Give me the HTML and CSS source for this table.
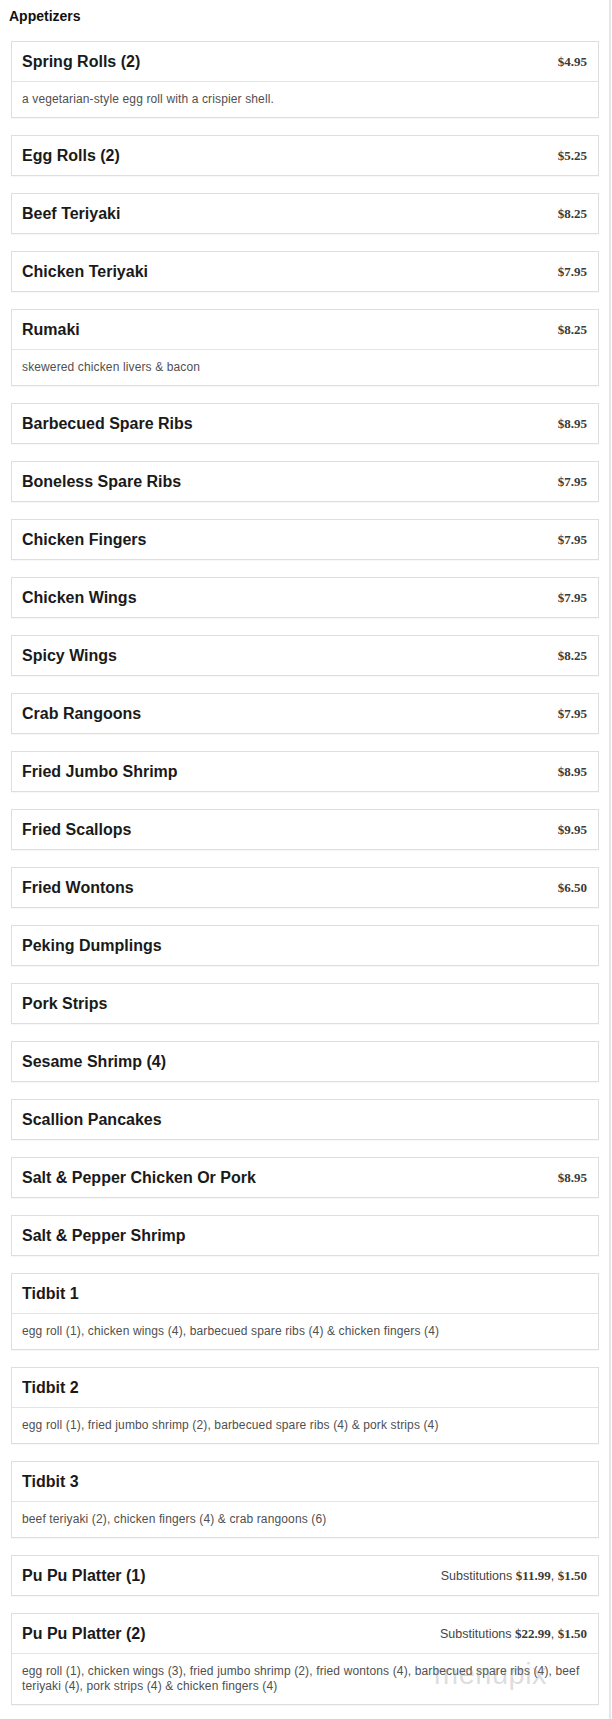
FILE: index.html
```html
<!DOCTYPE html>
<html>
<head>
<meta charset="utf-8">
<link rel="stylesheet" href="styles.css">
</head>
<body>
<div class="page">
  <h2 class="section-title">Appetizers</h2>
  <div class="menu-list">
    <div class="item">
      <div class="item-head"><span class="name">Spring Rolls (2)</span><span class="price">$4.95</span></div>
      <div class="item-desc">a vegetarian-style egg roll with a crispier shell.</div>
    </div>
    <div class="item">
      <div class="item-head"><span class="name">Egg Rolls (2)</span><span class="price">$5.25</span></div>
    </div>
    <div class="item">
      <div class="item-head"><span class="name">Beef Teriyaki</span><span class="price">$8.25</span></div>
    </div>
    <div class="item">
      <div class="item-head"><span class="name">Chicken Teriyaki</span><span class="price">$7.95</span></div>
    </div>
    <div class="item">
      <div class="item-head"><span class="name">Rumaki</span><span class="price">$8.25</span></div>
      <div class="item-desc">skewered chicken livers &amp; bacon</div>
    </div>
    <div class="item">
      <div class="item-head"><span class="name">Barbecued Spare Ribs</span><span class="price">$8.95</span></div>
    </div>
    <div class="item">
      <div class="item-head"><span class="name">Boneless Spare Ribs</span><span class="price">$7.95</span></div>
    </div>
    <div class="item">
      <div class="item-head"><span class="name">Chicken Fingers</span><span class="price">$7.95</span></div>
    </div>
    <div class="item">
      <div class="item-head"><span class="name">Chicken Wings</span><span class="price">$7.95</span></div>
    </div>
    <div class="item">
      <div class="item-head"><span class="name">Spicy Wings</span><span class="price">$8.25</span></div>
    </div>
    <div class="item">
      <div class="item-head"><span class="name">Crab Rangoons</span><span class="price">$7.95</span></div>
    </div>
    <div class="item">
      <div class="item-head"><span class="name">Fried Jumbo Shrimp</span><span class="price">$8.95</span></div>
    </div>
    <div class="item">
      <div class="item-head"><span class="name">Fried Scallops</span><span class="price">$9.95</span></div>
    </div>
    <div class="item">
      <div class="item-head"><span class="name">Fried Wontons</span><span class="price">$6.50</span></div>
    </div>
    <div class="item">
      <div class="item-head"><span class="name">Peking Dumplings</span></div>
    </div>
    <div class="item">
      <div class="item-head"><span class="name">Pork Strips</span></div>
    </div>
    <div class="item">
      <div class="item-head"><span class="name">Sesame Shrimp (4)</span></div>
    </div>
    <div class="item">
      <div class="item-head"><span class="name">Scallion Pancakes</span></div>
    </div>
    <div class="item">
      <div class="item-head"><span class="name">Salt &amp; Pepper Chicken Or Pork</span><span class="price">$8.95</span></div>
    </div>
    <div class="item">
      <div class="item-head"><span class="name">Salt &amp; Pepper Shrimp</span></div>
    </div>
    <div class="item">
      <div class="item-head"><span class="name">Tidbit 1</span></div>
      <div class="item-desc">egg roll (1), chicken wings (4), barbecued spare ribs (4) &amp; chicken fingers (4)</div>
    </div>
    <div class="item">
      <div class="item-head"><span class="name">Tidbit 2</span></div>
      <div class="item-desc">egg roll (1), fried jumbo shrimp (2), barbecued spare ribs (4) &amp; pork strips (4)</div>
    </div>
    <div class="item">
      <div class="item-head"><span class="name">Tidbit 3</span></div>
      <div class="item-desc">beef teriyaki (2), chicken fingers (4) &amp; crab rangoons (6)</div>
    </div>
    <div class="item">
      <div class="item-head"><span class="name">Pu Pu Platter (1)</span><span class="subs">Substitutions <span class="price">$11.99</span>, <span class="price">$1.50</span></span></div>
    </div>
    <div class="item">
      <div class="item-head"><span class="name">Pu Pu Platter (2)</span><span class="subs">Substitutions <span class="price">$22.99</span>, <span class="price">$1.50</span></span></div>
      <div class="item-desc">egg roll (1), chicken wings (3), fried jumbo shrimp (2), fried wontons (4), barbecued spare ribs (4), beef teriyaki (4), pork strips (4) &amp; chicken fingers (4)</div>
      <div class="watermark">menupix</div>
    </div>
  </div>
</div>
</body>
</html>
```

FILE: styles.css
```css
html, body {
  margin: 0;
  padding: 0;
  background: #fff;
}

body {
  font-family: "Liberation Sans", Arial, sans-serif;
  color: #222;
}

.page {
  width: 611px;
  min-height: 1719px;
  box-sizing: border-box;
  border-right: 2px solid #e6e6e6;
  padding: 0 11px 0 11px;
}

.section-title {
  margin: 0;
  padding: 8px 0 0 0;
  margin-left: -2px;
  font-size: 14px;
  line-height: 16px;
  font-weight: bold;
  color: #111;
  height: 41px;
  box-sizing: border-box;
}

.menu-list {
  display: flex;
  flex-direction: column;
  gap: 17px;
  width: 588px;
}

.item {
  position: relative;
  border: 1px solid #dedede;
  background: #fff;
  box-shadow: 0 1px 0 rgba(0, 0, 0, 0.03);
}

.item-head {
  height: 39px;
  display: flex;
  align-items: center;
  justify-content: space-between;
  padding: 0 11px 0 10px;
}

.name {
  font-size: 16px;
  font-weight: bold;
  color: #1a1a1a;
}

.price {
  font-family: "Liberation Serif", "Times New Roman", serif;
  font-weight: bold;
  font-size: 13px;
  letter-spacing: 0;
  color: #3a3a3a;
}

.subs {
  font-size: 12.5px;
  color: #444;
}

.item-desc {
  border-top: 1px solid #e4e4e4;
  padding: 10px 11px 10px 10px;
  font-size: 12px;
  line-height: 15px;
  letter-spacing: 0.13px;
  color: #505050;
}

.watermark {
  position: absolute;
  left: 422px;
  top: 44px;
  font-size: 29px;
  letter-spacing: 0.5px;
  color: rgba(140, 140, 140, 0.3);
  pointer-events: none;
}
```
